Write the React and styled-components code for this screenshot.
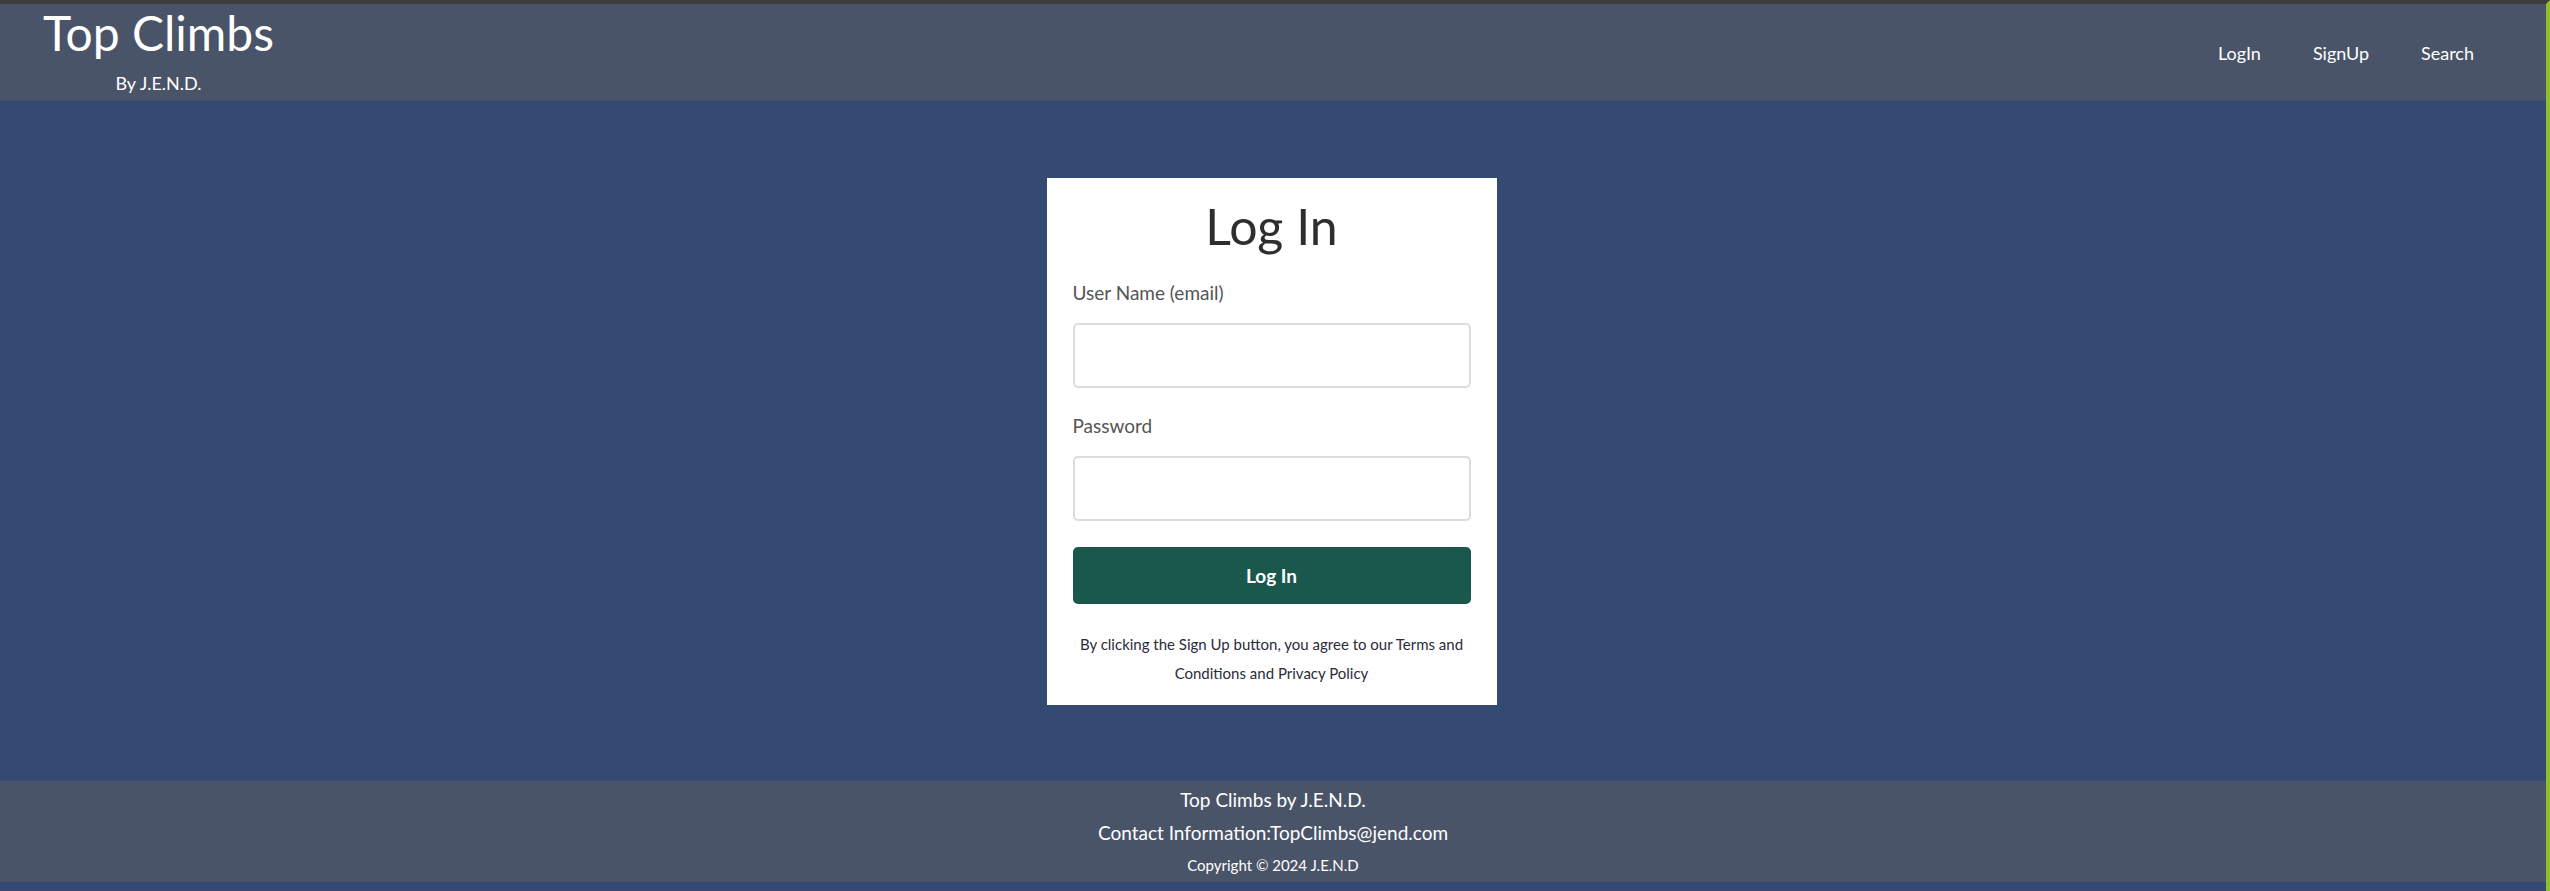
import React from 'react';
import styled, { createGlobalStyle } from 'styled-components';

const GlobalStyle = createGlobalStyle`
  html, body {
    margin: 0;
    padding: 0;
    background: #354a72;
  }
  body {
    font-family: Lato, "Open Sans", sans-serif;
  }
  * {
    box-sizing: border-box;
  }
`;

const Page = styled.div`
  min-height: 891px;
  border-top: 4px solid #3c3c3c;
  border-right: 4px solid #8cc12a;
  background: #354a72;
  display: flex;
  flex-direction: column;
`;

const Header = styled.header`
  height: 97px;
  background: #4a5468;
  display: flex;
  align-items: flex-start;
  justify-content: space-between;
  padding: 0 72px 0 43px;
  color: #fff;
`;

const Brand = styled.div`
  display: flex;
  flex-direction: column;
  align-items: center;
`;

const BrandTitle = styled.h1`
  margin: 0;
  font-size: 48px;
  font-weight: 400;
  line-height: 58px;
`;

const BrandSub = styled.span`
  font-size: 18px;
  line-height: 22px;
  margin-top: 10px;
`;

const Nav = styled.nav`
  align-self: center;
  display: flex;
  gap: 52px;
`;

const NavLink = styled.a`
  color: #fff;
  font-size: 18px;
  text-decoration: none;
`;

const Main = styled.main`
  height: 680px;
  display: flex;
  justify-content: center;
  align-items: center;
  padding-right: 3px;
`;

const Card = styled.form`
  width: 450px;
  background: #fff;
  padding: 18px 26px 17px;
  display: flex;
  flex-direction: column;
`;

const Title = styled.h2`
  margin: 0 0 25px;
  font-size: 50px;
  font-weight: 400;
  line-height: 60px;
  text-align: center;
  color: #2e2e2e;
`;

const Label = styled.label`
  font-size: 19px;
  line-height: 24px;
  color: #555;
  margin-bottom: 18px;
`;

const Input = styled.input`
  height: 65px;
  border: 2px solid #dcdcdc;
  border-radius: 5px;
  margin-bottom: ${p => p.$gap}px;
  font-size: 18px;
  padding: 0 12px;
  outline: none;
`;

const Button = styled.button`
  height: 57px;
  border: none;
  border-radius: 5px;
  background: #1a574d;
  color: #fff;
  font-family: inherit;
  font-size: 19px;
  font-weight: 700;
  margin-bottom: 26px;
  cursor: pointer;
`;

const Terms = styled.p`
  margin: 0;
  font-size: 15px;
  line-height: 29px;
  text-align: center;
  color: #2b2b3a;
`;

const Footer = styled.footer`
  height: 101px;
  background: #4a5468;
  color: #fff;
  display: flex;
  flex-direction: column;
  align-items: center;
  padding-top: 6px;
`;

const FooterLine = styled.div`
  font-size: ${p => p.$size}px;
  line-height: ${p => p.$lh}px;
`;

export default function App() {
  return (
    <>
      <GlobalStyle />
      <Page>
        <Header>
          <Brand>
            <BrandTitle>Top Climbs</BrandTitle>
            <BrandSub>By J.E.N.D.</BrandSub>
          </Brand>
          <Nav>
            <NavLink href="#">LogIn</NavLink>
            <NavLink href="#">SignUp</NavLink>
            <NavLink href="#">Search</NavLink>
          </Nav>
        </Header>
        <Main>
          <Card onSubmit={e => e.preventDefault()}>
            <Title>Log In</Title>
            <Label htmlFor="email">User Name (email)</Label>
            <Input id="email" type="email" $gap={26} />
            <Label htmlFor="password">Password</Label>
            <Input id="password" type="password" $gap={26} />
            <Button type="submit">Log In</Button>
            <Terms>
              By clicking the Sign Up button, you agree to our Terms and Conditions and Privacy Policy
            </Terms>
          </Card>
        </Main>
        <Footer>
          <FooterLine $size={19} $lh={26}>Top Climbs by J.E.N.D.</FooterLine>
          <FooterLine $size={19} $lh={40}>Contact Information:TopClimbs@jend.com</FooterLine>
          <FooterLine $size={15} $lh={24}>Copyright © 2024 J.E.N.D</FooterLine>
        </Footer>
      </Page>
    </>
  );
}
